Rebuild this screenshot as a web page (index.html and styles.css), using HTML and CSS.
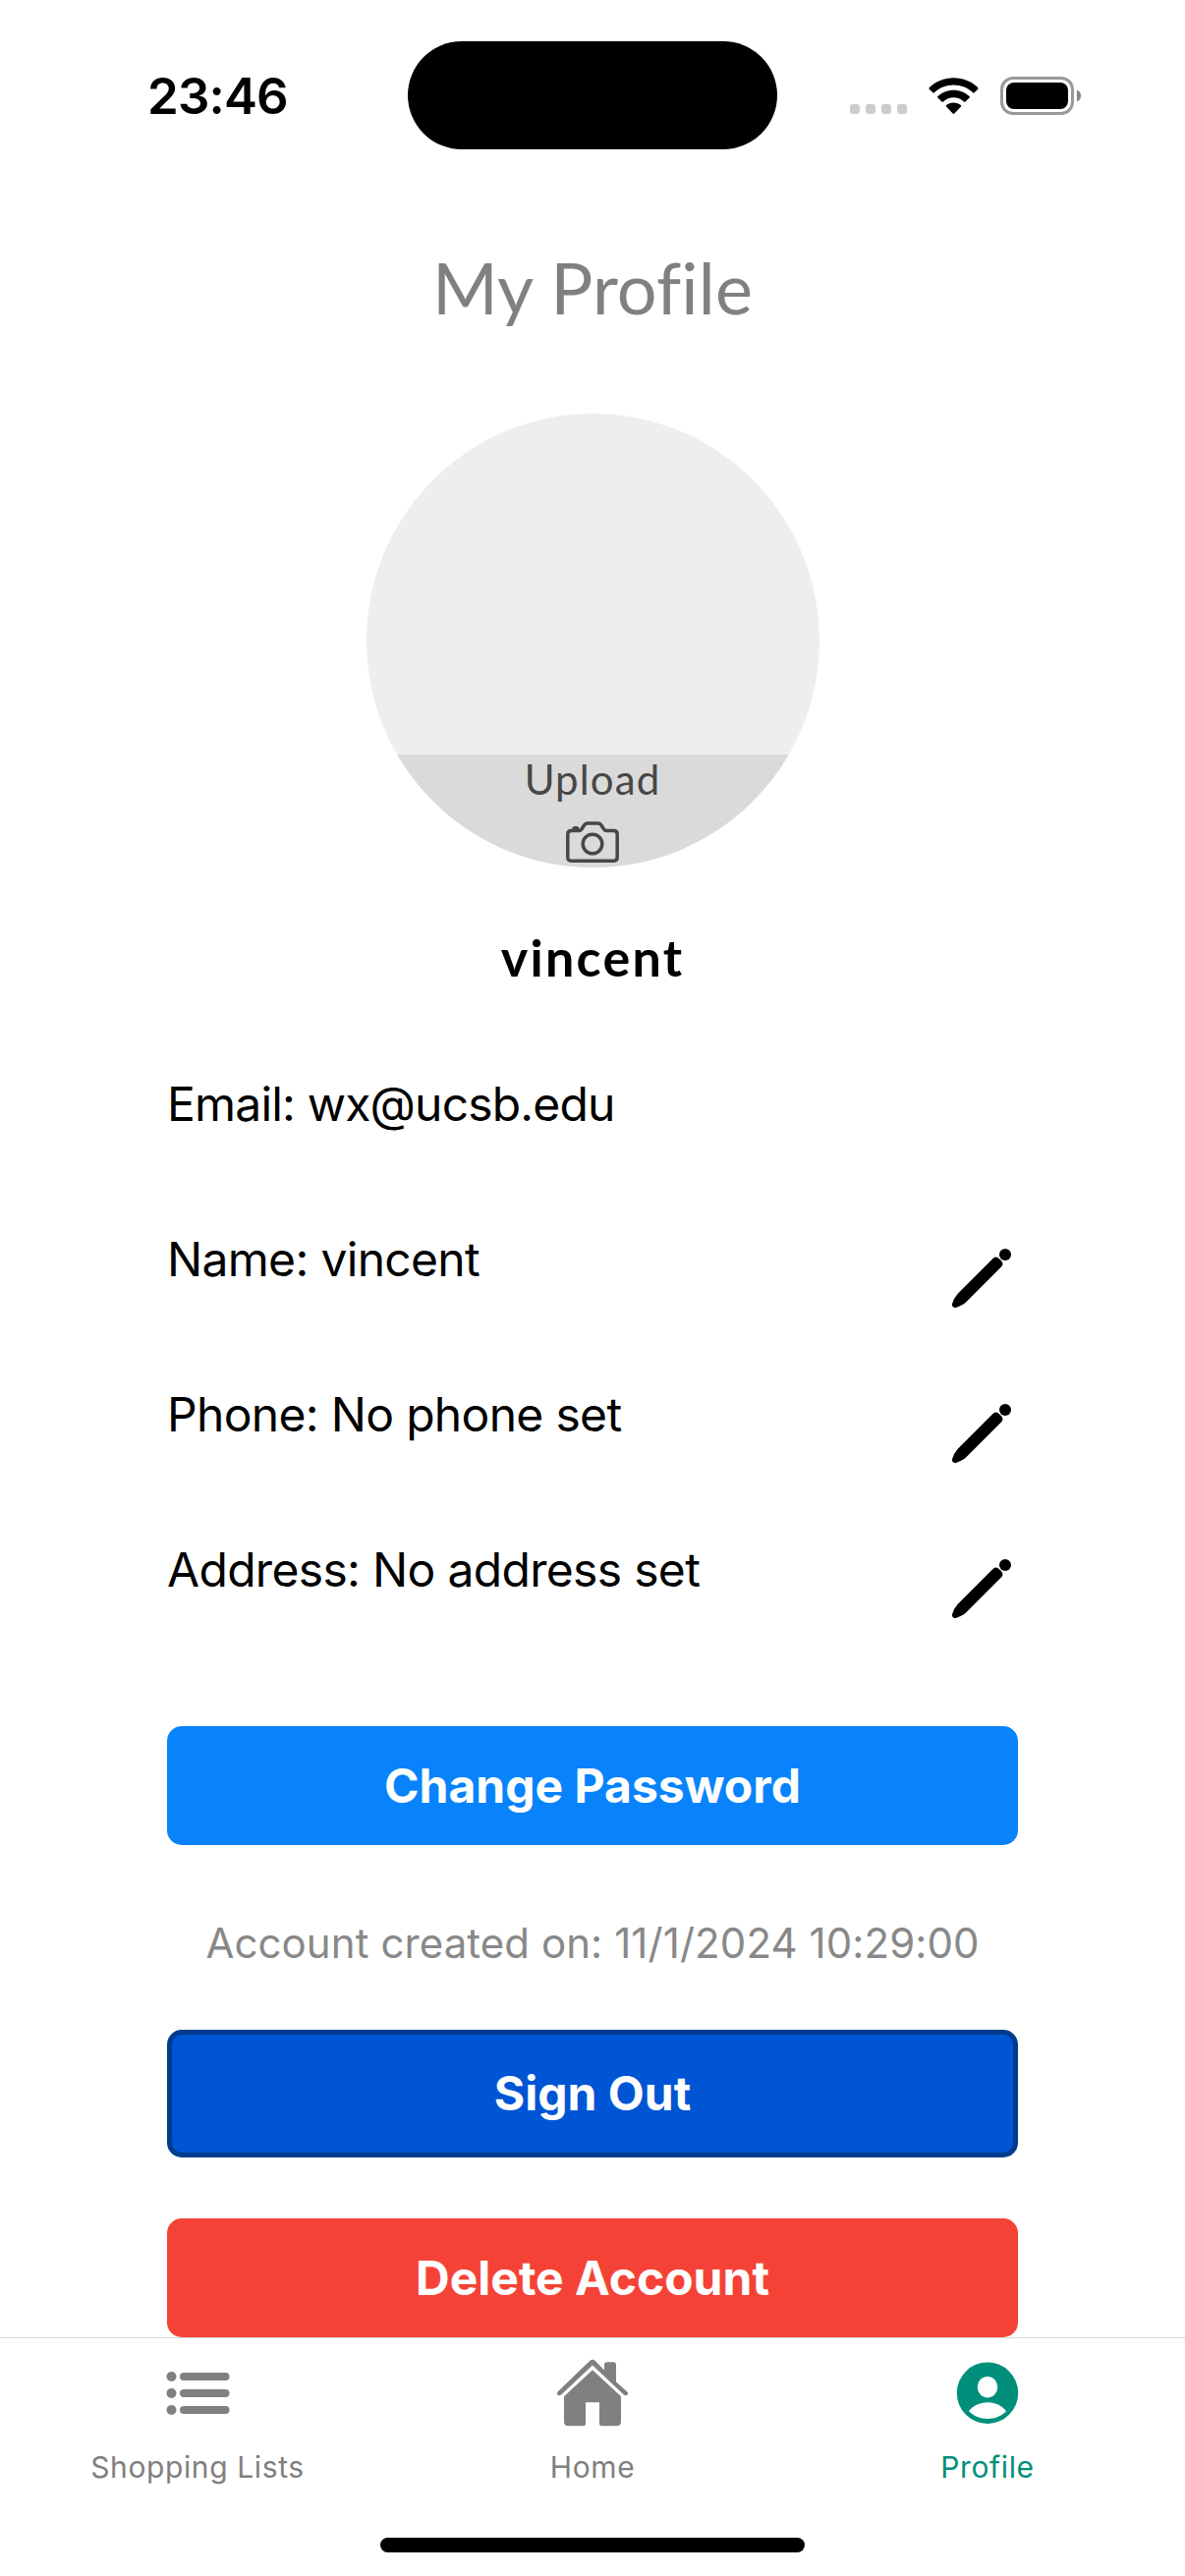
FILE: index.html
```html
<!DOCTYPE html>
<html lang="en">
<head>
<meta charset="utf-8">
<title>My Profile</title>
<link rel="stylesheet" href="styles.css">
</head>
<body>
<div class="screen">
  <header class="status">
    <div class="status-left"><span class="time">23:46</span></div>
    <div class="island"></div>
    <div class="status-right">
      <svg class="signal" viewBox="0 0 58 10"><g fill="#ccc"><rect width="10" height="10" rx="3"/><rect x="16" width="10" height="10" rx="3"/><rect x="32" width="10" height="10" rx="3"/><rect x="48" width="10" height="10" rx="3"/></g></svg>
      <svg class="wifi" viewBox="0 0 51 38"><path d="M25.500 .3C35 .3 44 4 50.300 10.200Q51 11 50.300 11.700L46.600 15.300Q45.900 16 45.200 15.300C39.900 10.400 33 7.600 25.500 7.600S11.100 10.400 5.800 15.300Q5.100 16 4.400 15.300L.7 11.700Q0 11 .7 10.200C7 4 16 .3 25.500 .3ZM25.500 12.700C31.700 12.700 37.400 15.100 41.600 19Q42.400 19.800 41.600 20.500L37.500 24.400Q36.800 25.100 36 24.400C33.200 21.900 29.500 20.300 25.500 20.300S17.800 21.900 15 24.400Q14.200 25.100 13.500 24.400L9.400 20.500Q8.600 19.800 9.400 19C13.600 15.100 19.300 12.700 25.500 12.700ZM25.500 25.400C28.400 25.400 31 26.400 32.900 28Q33.700 28.700 33 29.500L26.300 36.600Q25.500 37.400 24.700 36.600L18 29.500Q17.300 28.700 18.100 28C20 26.400 22.600 25.400 25.500 25.400Z"/></svg>
      <svg class="battery" viewBox="0 0 82 39"><rect x="1.500" y="1.500" width="72" height="36" rx="11.500" fill="none" stroke="#999" stroke-width="3"/><rect x="6" y="6" width="63" height="27" rx="8"/><path d="M78 13.500C80.500 14.500 82 16.800 82 19.500S80.500 24.500 78 25.500Z" fill="#858585"/></svg>
    </div>
  </header>
  <main class="content">
    <h1 class="title">My Profile</h1>
    <div class="avatar">
      <div class="upload">
        <span class="upload-label">Upload</span>
        <svg class="camera" viewBox="0 0 54 42"><g fill="none" stroke="#474747" stroke-width="3.500"><path d="M5.500 9.500H13C14.500 9.500 15.300 9 16 7.800L18.500 4C19.300 2.600 20.300 1.900 22 1.900H32.500C34.200 1.900 35.200 2.600 36 4L38.500 7.800C39.200 9 40 9.500 41.500 9.500H48.500C51 9.500 52.200 10.700 52.200 13.200V36.500C52.200 39 51 40.200 48.500 40.200H5.500C3 40.200 1.800 39 1.800 36.500V13.200C1.800 10.700 3 9.500 5.500 9.500Z"/><circle cx="27" cy="23" r="9.800"/></g><path fill="#474747" d="M6 9.500V8Q6.500 5 9 5H11Q13.200 5 13.500 8V9.500Z"/></svg>
      </div>
    </div>
    <h2 class="name">vincent</h2>
    <section class="fields">
      <div class="row"><span class="email">Email: wx@ucsb.edu</span></div>
      <div class="row"><span>Name: vincent</span><svg class="pen" viewBox="0 0 60 61"><use href="#pen"/></svg></div>
      <div class="row"><span>Phone: No phone set</span><svg class="pen" viewBox="0 0 60 61"><use href="#pen"/></svg></div>
      <div class="row"><span>Address: No address set</span><svg class="pen" viewBox="0 0 60 61"><use href="#pen"/></svg></div>
    </section>
    <button class="btn change">Change Password</button>
    <p class="created">Account created on: 11/1/2024 10:29:00</p>
    <button class="btn signout">Sign Out</button>
    <button class="btn delete">Delete Account</button>
  </main>
  <nav class="tabs">
    <a class="tab"><svg class="tab-icon" viewBox="0 0 72 72"><g fill="#808080"><circle cx="9.500" cy="19" r="5"/><circle cx="9.500" cy="36" r="5"/><circle cx="9.500" cy="53" r="5"/><rect x="18" y="15" width="50.500" height="8" rx="4"/><rect x="18" y="32" width="50.500" height="8" rx="4"/><rect x="18" y="49" width="50.500" height="8" rx="4"/></g></svg><span>Shopping Lists</span></a>
    <a class="tab"><svg class="tab-icon" viewBox="0 0 72 72"><g fill="#808080"><path d="M33.200 3Q36 .4 38.800 3L48 12.600V7.500Q48 4.300 51 4.300H57Q60 4.300 60 7.500V24.500L71.200 34.200Q72.800 36 71.400 37.700Q69.600 39 67.800 37.500L36 7.500L4.200 37.500Q2.400 39 .6 37.700Q-.8 36 .8 34.200Z"/><path d="M36 12.200L65 39.200V65Q65 69.300 60.500 69.300H45Q43 69.300 43 67.300V45.300H29V67.300Q29 69.300 27 69.300H11.500Q7 69.300 7 65V39.200Z"/></g></svg><span>Home</span></a>
    <a class="tab active"><svg class="tab-icon" viewBox="0 0 72 72"><circle cx="36" cy="35.700" r="31.200" fill="#008f7a"/><ellipse cx="36" cy="29.700" rx="10.300" ry="10.800" fill="#fff"/><path d="M17 54.300C21 49 28 45.300 36 45.300S51 49 55 54.300C50 59.300 43.500 62 36 62S22 59.300 17 54.300Z" fill="#fff"/></svg><span>Profile</span></a>
    <div class="home-indicator"></div>
  </nav>
</div>
<svg width="0" height="0" class="defs"><defs><g id="pen"><circle cx="54" cy="6" r="6"/><path d="M41.500 10Q45 7 48 10.200L50 12.200Q53 15.500 50 18.500L15.500 53Q12 57 4.500 59.700Q-.8 61 .1 56Q1.500 50.500 6 45.500Z"/></g></defs></svg>
</body>
</html>
```
FILE: styles.css
```css
* { box-sizing: border-box; margin: 0; padding: 0; }
body { background: #fff; font-family: Inter, "Liberation Sans", sans-serif; color: #000; }
svg { display: block; flex: none; }
.defs { position: absolute; }
.screen { width: 1206px; height: 2622px; display: flex; flex-direction: column; overflow: hidden; }
.status { height: 194px; padding-top: 42px; display: grid; grid-template-columns: 415px 376px 415px; align-items: start; }
.status-left { height: 110px; padding-left: 150px; display: flex; align-items: center; }
.time { font-size: 51px; font-weight: 600; line-height: 60px; letter-spacing: -0.86px; padding-top: 2px; }
.island { height: 110px; border-radius: 55px; background: #000; }
.status-right { height: 110px; padding: 36px 0 0 74px; display: flex; align-items: flex-start; }
.signal { width: 58px; height: 10px; margin-top: 28px; }
.wifi { width: 51px; height: 38px; margin: 1px 0 0 22px; }
.battery { width: 82px; height: 39px; margin-left: 22px; }
.content { flex: none; height: 2185px; padding: 56px 170px 0; display: flex; flex-direction: column; align-items: stretch; }
.title { font: 400 72px/84px Lato, sans-serif; letter-spacing: 0.15px; font-variant-ligatures: none; color: #808080; text-align: center; }
.avatar { width: 461px; height: 462px; margin: 87px auto 0; border-radius: 50%; background: #eee; overflow: hidden; display: flex; align-items: flex-end; }
.upload { width: 100%; height: 115px; background: #dadada; display: flex; flex-direction: column; align-items: center; }
.upload-label { font: 400 42px/50px Lato, sans-serif; letter-spacing: 1.1px; color: #474747; }
.camera { width: 54px; height: 42px; margin-top: 18px; }
.name { margin-top: 61px; font: 700 52px/60px Lato, sans-serif; letter-spacing: 2.28px; text-align: center; }
.fields { margin-top: 41px; }
.row { height: 158px; display: flex; align-items: center; justify-content: space-between; font-size: 48px; line-height: 58px; letter-spacing: -0.68px; }
.email { letter-spacing: -0.82px; }
.pen { width: 60px; height: 61px; margin: 38px 7px 0 0; }
.btn { flex: none; height: 121px; border: 0; border-radius: 15px; font: 700 48px/58px Inter, sans-serif; letter-spacing: 0; color: #fff; }
.change { margin-top: 80px; background: #0883fb; }
.created { margin-top: 70px; font-size: 42px; line-height: 60px; letter-spacing: 0.08px; color: #888; text-align: center; }
.signout { height: 130px; margin-top: 58px; border: 5px solid #003b8e; background: #0055d4; }
.delete { margin-top: 62px; background: #f44336; }
.tabs { height: 243px; border-top: 1px solid #d8d8d8; display: grid; grid-template-columns: repeat(3, 402px); grid-template-rows: 203px 15px; }
.tab { padding-top: 20px; display: flex; flex-direction: column; align-items: center; font-size: 30px; line-height: 40px; letter-spacing: 0.62px; color: #808080; }
.tab span { margin-top: 19px; }
.tab.active { color: #008f7a; }
.tab-icon { width: 72px; height: 72px; }
.home-indicator { grid-column: 1 / -1; justify-self: center; width: 432px; height: 15px; border-radius: 8px; background: #000; }
```
